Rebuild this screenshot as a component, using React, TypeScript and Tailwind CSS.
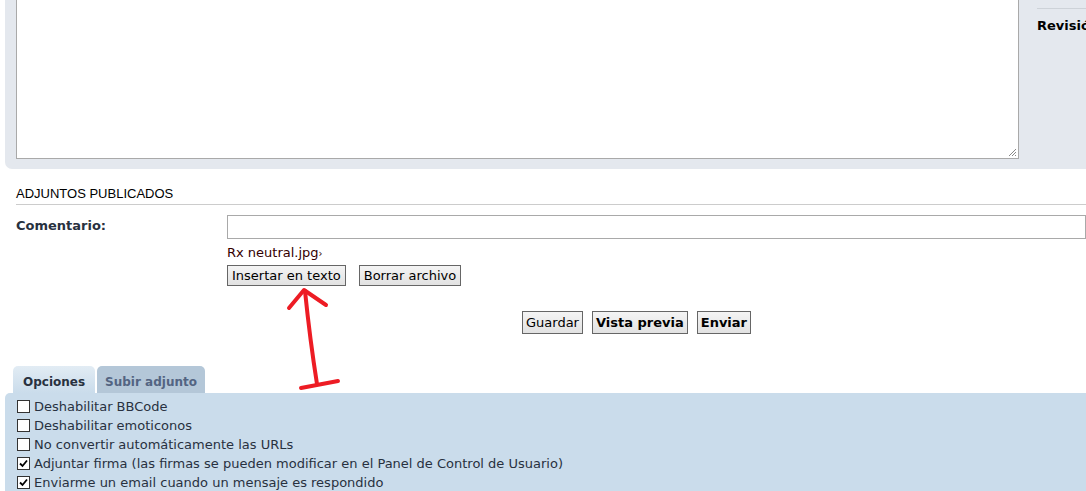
import React from 'react';

const Check = ({ checked }: { checked?: boolean }) => (
   <span className="flex h-[13px] w-[13px] shrink-0 items-center justify-center border border-[#333] bg-white">
      {checked && (
         <svg width="9" height="9" viewBox="0 0 9 9">
            <path d="M1 4.5 L3.5 7 L8 1.5" fill="none" stroke="#000" strokeWidth="1.8" />
         </svg>
      )}
   </span>
);

const Btn = ({ children, bold, className = '' }: { children: React.ReactNode; bold?: boolean; className?: string }) => (
   <button
      type="button"
      className={`border border-[#666] bg-gradient-to-b from-[#f4f4f4] to-[#e2e2e2] px-[4px] text-[13px] leading-[19px] text-black ${
         bold ? 'font-bold' : ''
      } ${className}`}
   >
      {children}
   </button>
);

const options = [
   { label: 'Deshabilitar BBCode', checked: false },
   { label: 'Deshabilitar emoticonos', checked: false },
   { label: 'No convertir automáticamente las URLs', checked: false },
   { label: 'Adjuntar firma (las firmas se pueden modificar en el Panel de Control de Usuario)', checked: true },
   { label: 'Enviarme un email cuando un mensaje es respondido', checked: true },
];

export default function App() {
   return (
      <div className="relative h-[491px] w-[1086px] overflow-hidden bg-white font-['DejaVu_Sans',sans-serif] text-[12px] text-[#28313f]">
         {/* editor panel */}
         <div className="ml-[5px] flex h-[169px] rounded-bl-[7px] bg-[#e4e8ee]">
            <div className="relative ml-[11px] h-[159px] w-[1003px] shrink-0 border border-t-0 border-[#a9a9a9] bg-white">
               <svg className="absolute bottom-[1px] right-[1px]" width="9" height="9" viewBox="0 0 9 9">
                  <path d="M1 8 L8 1 M4 8 L8 4 M7 8 L8 7" stroke="#888" strokeWidth="1" />
               </svg>
            </div>
            <div className="ml-[18px] min-w-0 flex-1 pt-[8px]">
               <div className="whitespace-nowrap border-t border-[#cdd2d8] pt-[7px] text-[13px] font-bold text-black">Revisión</div>
            </div>
         </div>

         {/* attachments */}
         <div className="ml-[16px] mt-[16px]">
            <h3 className="border-b border-[#ccc] pb-[3px] pt-[1px] font-['Liberation_Sans',sans-serif] text-[13px] leading-[15px] text-black">
               ADJUNTOS PUBLICADOS
            </h3>
            <div className="mt-[10px] flex">
               <label className="w-[211px] pt-[1px] text-[13px] font-bold text-[#28313f]">Comentario:</label>
               <div className="flex-1">
                  <div className="h-[24px] border border-[#a9a9a9] bg-white" />
                  <div className="mt-[6px] text-[13px] leading-[15px] text-[#300]">
                     Rx neutral.jpg<span className="text-[10px]">›</span>
                  </div>
                  <div className="mt-[4px] flex gap-[13px]">
                     <Btn>Insertar en texto</Btn>
                     <Btn>Borrar archivo</Btn>
                  </div>
               </div>
            </div>
         </div>

         {/* submit buttons */}
         <div className="ml-[522px] mt-[25px] flex gap-[9px]">
            <Btn className="!px-[3px] leading-[21px]">Guardar</Btn>
            <Btn bold className="!px-[3px] leading-[21px]">Vista previa</Btn>
            <Btn bold className="!px-[3px] leading-[21px]">Enviar</Btn>
         </div>

         {/* tabs */}
         <div className="ml-[13px] mt-[32px] flex gap-[2px]">
            <div className="h-[27px] rounded-t-[5px] bg-gradient-to-b from-[#e2ecf4] to-[#cadceb] px-[10px] pt-[7px] text-[12px] font-bold text-[#28313f]">
               Opciones
            </div>
            <div className="h-[27px] rounded-t-[5px] bg-[#b4c7d8] px-[8px] pt-[7px] text-[12px] font-bold text-[#536482]">
               Subir adjunto
            </div>
         </div>
         <div className="ml-[5px] h-[120px] rounded-tl-[5px] bg-[#cadceb] pl-[12px] pt-[4px]">
            {options.map((o) => (
               <div key={o.label} className="flex h-[19px] items-center gap-[4px] text-[13px] text-[#28313f]">
                  <Check checked={o.checked} />
                  <span>{o.label}</span>
               </div>
            ))}
         </div>

         {/* red arrow annotation */}
         <svg className="pointer-events-none absolute left-0 top-0" width="1086" height="491">
            <g fill="none" stroke="#ed1c24" strokeWidth="4" strokeLinecap="round" strokeLinejoin="round">
               <path d="M289 308 L304 290 L326 305" />
               <path d="M305 291 Q310 340 317 384" />
               <path d="M301 388 L338 381" />
            </g>
         </svg>
      </div>
   );
}
